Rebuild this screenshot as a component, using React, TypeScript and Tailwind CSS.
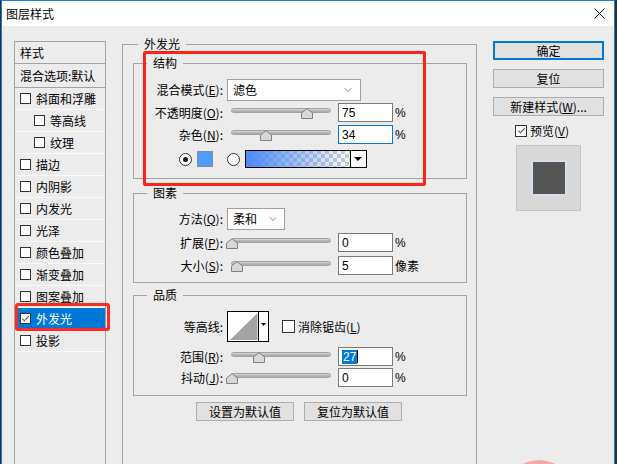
import React from "react";
import { ChevronDown } from "lucide-react";

const NUM = "font-['Liberation_Sans','Noto_Sans_CJK_SC',sans-serif]";

function Mn({ c }: { c: string }) {
  return <span className="underline underline-offset-[1px]">{c}</span>;
}

function Label({ children }: { children: React.ReactNode }) {
  return <div className="w-[89px] shrink-0 text-right whitespace-nowrap">{children}</div>;
}

function Check({ on, size = 11 }: { on?: boolean; size?: number }) {
  return (
    <div
      className={`${size === 13 ? "w-[13px] h-[13px]" : size === 12 ? "w-[12px] h-[12px]" : "w-[11px] h-[11px]"} shrink-0 border border-[#333] bg-white flex items-center justify-center`}
    >
      {on && (
        <svg width="9" height="9" viewBox="0 0 9 9">
          <path d="M1.2 4.6 L3.4 6.8 L7.8 2.2" fill="none" stroke="#555" strokeWidth="1.1" />
        </svg>
      )}
    </div>
  );
}

function Radio({ on }: { on?: boolean }) {
  return (
    <div className="w-[13px] h-[13px] shrink-0 rounded-full border border-[#333] bg-white flex items-center justify-center">
      {on && <div className="w-[5px] h-[5px] rounded-full bg-[#1a1a1a]" />}
    </div>
  );
}

function Slider({ value }: { value: number }) {
  return (
    <div className="relative w-[107px] h-[19px] ml-[4px] shrink-0">
      <div className="absolute left-[4px] top-[5px] w-[100px] h-[5px] rounded-full border border-[#a2a2a2] bg-gradient-to-b from-[#dadada] via-[#b9b9b9] to-[#a9a9a9]" />
      <svg className="absolute top-[5px]" style={{ left: 4 + value - 5.5 }} width="12" height="11" viewBox="0 0 12 11">
        <path d="M0.5 10.5 V5 L6 0.7 L11.5 5 V10.5 Z" fill="#d8d8d8" stroke="#808080" strokeWidth="1" />
      </svg>
    </div>
  );
}

function NumBox({ v, focus, sel }: { v: string; focus?: boolean; sel?: boolean }) {
  return (
    <div
      className={`w-[55px] h-[19px] ml-[4px] shrink-0 bg-white border ${focus ? "border-[#0078d7]" : "border-[#7a7a7a]"} flex items-center pl-[3px] text-[12px] ${NUM}`}
    >
      {sel ? <span className="bg-[#0078d7] text-white px-[1px] leading-[14px]">{v}</span> : v}
      {sel && <span className="w-[1px] h-[13px] bg-black" />}
    </div>
  );
}

function Group({ title, className, children }: { title: string; className: string; children: React.ReactNode }) {
  return (
    <div className={`relative w-[334px] border border-[#a3a3a3] ${className}`}>
      <span className="absolute left-[13px] top-[-9px] px-[6px] h-[16px] leading-[16px] bg-[#ececec]">{title}</span>
      {children}
    </div>
  );
}

const styles: { t: string; indent?: boolean; on?: boolean }[] = [
  { t: "斜面和浮雕" },
  { t: "等高线", indent: true },
  { t: "纹理", indent: true },
  { t: "描边" },
  { t: "内阴影" },
  { t: "内发光" },
  { t: "光泽" },
  { t: "颜色叠加" },
  { t: "渐变叠加" },
  { t: "图案叠加" },
  { t: "外发光", on: true },
  { t: "投影" },
];

export default function App() {
  return (
    <div className="relative w-[617px] h-[464px] overflow-hidden bg-[#2d2f33] flex font-['Noto_Sans_CJK_SC',sans-serif] text-[12px] leading-[16px] text-black">
      <div className="ml-[1px] w-[614px] h-[490px] shrink-0 border-x border-t border-[#1a7fd4] bg-[#ececec]">
        {/* title bar */}
        <div className="h-[25px] bg-white flex items-center justify-between pl-[4px] pr-[9px]">
          <span>图层样式</span>
          <svg width="11" height="11" viewBox="0 0 11 11">
            <path d="M0.5 0.5 L10.5 10.5 M10.5 0.5 L0.5 10.5" stroke="#111" strokeWidth="1" />
          </svg>
        </div>

        <div className="flex items-start pl-[12px]">
          {/* style list */}
          <div className="mt-[15px] w-[92px] h-[440px] shrink-0 border-x border-t border-[#a3a3a3]">
            <div className="h-[22px] border-b border-[#a3a3a3] flex items-center pl-[5px]">样式</div>
            <div className="h-[24px] border-b border-[#a3a3a3] flex items-center pl-[5px] whitespace-nowrap">混合选项:默认</div>
            {styles.map((s) => (
              <div
                key={s.t}
                className={`h-[22px] border-b border-[#fafafa] flex items-center gap-[5px] ${s.indent ? "pl-[19px]" : "pl-[5px]"} ${s.on ? "bg-[#0078d7] text-white" : ""}`}
              >
                <Check on={s.on} />
                <span>{s.t}</span>
              </div>
            ))}
          </div>

          {/* outer glow */}
          <div className="relative mt-[18px] ml-[16px] w-[355px] h-[440px] shrink-0 border border-[#a3a3a3] px-[10px]">
            <span className="absolute left-[15px] top-[-9px] px-[6px] h-[16px] leading-[16px] bg-[#ececec]">外发光</span>

            <Group title="结构" className="mt-[18px] pt-[15px] pb-[10px]">
              <div className="flex items-center h-[22px]">
                <Label>
                  混合模式(<Mn c="E" />):
                </Label>
                <div className="ml-[4px] w-[134px] h-[22px] bg-white border border-[#a0a0a0] flex items-center justify-between pl-[5px] pr-[6px]">
                  <span>滤色</span>
                  <ChevronDown size={12} strokeWidth={1.3} color="#444" />
                </div>
              </div>
              <div className="flex items-center h-[19px] mt-[2px]">
                <Label>
                  不透明度(<Mn c="O" />):
                </Label>
                <Slider value={75} />
                <NumBox v="75" />
                <span className={`ml-[2px] ${NUM}`}>%</span>
              </div>
              <div className="flex items-center h-[19px] mt-[3px]">
                <Label>
                  杂色(<Mn c="N" />):
                </Label>
                <Slider value={34} />
                <NumBox v="34" focus />
                <span className={`ml-[2px] ${NUM}`}>%</span>
              </div>
              <div className="flex items-center h-[18px] mt-[6px] pl-[45px]">
                <Radio on />
                <div className="ml-[5px] w-[16px] h-[16px] bg-[#4f9cff] border border-[#8c8c8c]" />
                <div className="ml-[14px]">
                  <Radio />
                </div>
                <svg className="ml-[5px]" width="122" height="18" viewBox="0 0 122 18">
                  <defs>
                    <pattern id="chk" width="8" height="8" patternUnits="userSpaceOnUse">
                      <rect width="8" height="8" fill="#ffffff" />
                      <rect width="4" height="4" fill="#cccccc" />
                      <rect x="4" y="4" width="4" height="4" fill="#cccccc" />
                    </pattern>
                    <linearGradient id="fade" x1="0" x2="1" y1="0" y2="0">
                      <stop offset="0" stopColor="#4a8af5" stopOpacity="1" />
                      <stop offset="1" stopColor="#4a8af5" stopOpacity="0" />
                    </linearGradient>
                  </defs>
                  <rect x="0.5" y="0.5" width="121" height="17" fill="url(#chk)" />
                  <rect x="1" y="1" width="104" height="16" fill="url(#fade)" />
                  <rect x="105" y="1" width="16" height="16" fill="#ffffff" />
                  <path d="M105.5 1 V17" stroke="#000" />
                  <path d="M109 7 H117 L113 11 Z" fill="#000" />
                  <rect x="0.5" y="0.5" width="121" height="17" fill="none" stroke="#000" />
                </svg>
              </div>
            </Group>

            <Group title="图素" className="mt-[14px] pt-[14px] pb-[7px]">
              <div className="flex items-center h-[22px]">
                <Label>
                  方法(<Mn c="Q" />):
                </Label>
                <div className="ml-[4px] w-[58px] h-[22px] bg-white border border-[#a0a0a0] flex items-center justify-between pl-[5px] pr-[5px]">
                  <span>柔和</span>
                  <ChevronDown size={12} strokeWidth={1.3} color="#444" />
                </div>
              </div>
              <div className="flex items-center h-[19px] mt-[3px]">
                <Label>
                  扩展(<Mn c="P" />):
                </Label>
                <Slider value={0} />
                <NumBox v="0" />
                <span className={`ml-[2px] ${NUM}`}>%</span>
              </div>
              <div className="flex items-center h-[19px] mt-[4px]">
                <Label>
                  大小(<Mn c="S" />):
                </Label>
                <Slider value={5} />
                <NumBox v="5" />
                <span className="ml-[2px]">像素</span>
              </div>
            </Group>

            <Group title="品质" className="mt-[12px] pt-[15px] pb-[8px]">
              <div className="flex items-center h-[31px]">
                <Label>等高线:</Label>
                <svg className="ml-[4px] shrink-0" width="42" height="31" viewBox="0 0 42 31">
                  <rect x="0.5" y="0.5" width="41" height="30" fill="#ffffff" stroke="#000" />
                  <path d="M3 29 L30.5 2 V29 Z" fill="#a3a3a3" />
                  <path d="M31.5 1 V30" stroke="#000" />
                  <path d="M34 12 H39 L36.5 15 Z" fill="#000" />
                </svg>
                <div className="ml-[13px]">
                  <Check size={13} />
                </div>
                <span className="ml-[3px]">
                  消除锯齿(<Mn c="L" />)
                </span>
              </div>
              <div className="flex items-center h-[19px] mt-[5px]">
                <Label>
                  范围(<Mn c="R" />):
                </Label>
                <Slider value={27} />
                <NumBox v="27" sel />
                <span className={`ml-[2px] ${NUM}`}>%</span>
              </div>
              <div className="flex items-center h-[19px] mt-[2px]">
                <Label>
                  抖动(<Mn c="J" />):
                </Label>
                <Slider value={0} />
                <NumBox v="0" />
                <span className={`ml-[2px] ${NUM}`}>%</span>
              </div>
            </Group>

            <div className="flex gap-[10px] mt-[6px] ml-[63px]">
              <button className="w-[98px] h-[19px] bg-[#e1e1e1] border border-[#adadad] leading-[17px]">设置为默认值</button>
              <button className="w-[98px] h-[19px] bg-[#e1e1e1] border border-[#adadad] leading-[17px]">复位为默认值</button>
            </div>
          </div>

          {/* right column */}
          <div className="mt-[15px] ml-[16px] w-[111px] shrink-0 flex flex-col">
            <button className="h-[19px] bg-[#e1e1e1] border-2 border-[#0078d7] leading-[15px]">确定</button>
            <button className="mt-[9px] h-[19px] bg-[#e1e1e1] border border-[#adadad] leading-[17px]">复位</button>
            <button className="mt-[9px] h-[19px] bg-[#e1e1e1] border border-[#adadad] leading-[17px]">
              新建样式(<Mn c="W" />)...
            </button>
            <div className="mt-[8px] ml-[22px] flex items-center gap-[3px] h-[13px]">
              <Check on size={12} />
              <span>
                预览(<Mn c="V" />)
              </span>
            </div>
            <div className="mt-[8px] ml-[23px] w-[65px] h-[66px] bg-[#d8d8d8] border border-[#c4c4c4] flex items-center justify-center">
              <div className="w-[32px] h-[32px] bg-[#555555] shadow-[0_0_3px_1px_#d6e8ff]" />
            </div>
          </div>
        </div>
      </div>

      {/* annotations */}
      <div className="absolute left-[143px] top-[51px] w-[283px] h-[135px] border-[3px] border-[#ff2219] rounded-[2px]" />
      <div className="absolute left-[15px] top-[303px] w-[95px] h-[28px] border-[3px] border-[#ff2a22] rounded-[3px]" />
      <div className="absolute left-[505px] top-[460px] w-[68px] h-[68px] rounded-full bg-[#f5a8a8]" />
    </div>
  );
}
